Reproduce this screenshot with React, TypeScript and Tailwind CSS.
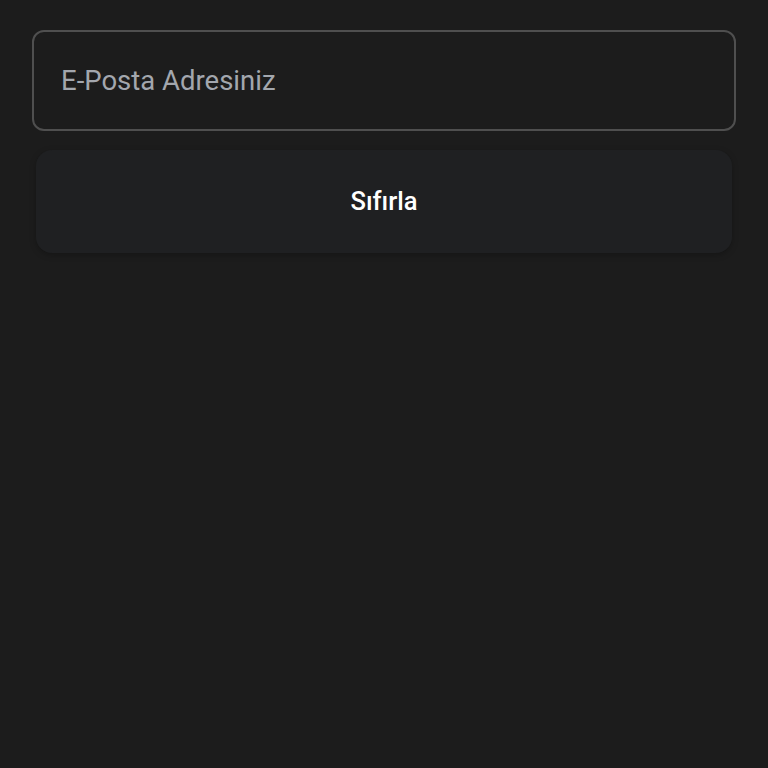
export default function App() {
    return (
        <div
            className="min-h-[768px] w-full bg-[#1c1c1c] px-8 pt-[30px]"
            style={{ fontFamily: "Roboto, 'Noto Sans', sans-serif" }}
        >
            <div className="flex flex-col gap-[19px]">
                <input
                    type="email"
                    placeholder="E-Posta Adresiniz"
                    className="h-[101px] w-full rounded-[12px] border-2 border-[#4f4f4f] bg-[#1c1c1c] px-[27px] text-[27.5px] text-white outline-none placeholder:text-[#a3a7ae]"
                />
                <button className="mx-1 h-[103px] rounded-[16px] bg-[#1f2022] text-[25.5px] font-medium text-white shadow-[0_2px_6px_rgba(0,0,0,0.25)]">
                    Sıfırla
                </button>
            </div>
        </div>
    );
}
